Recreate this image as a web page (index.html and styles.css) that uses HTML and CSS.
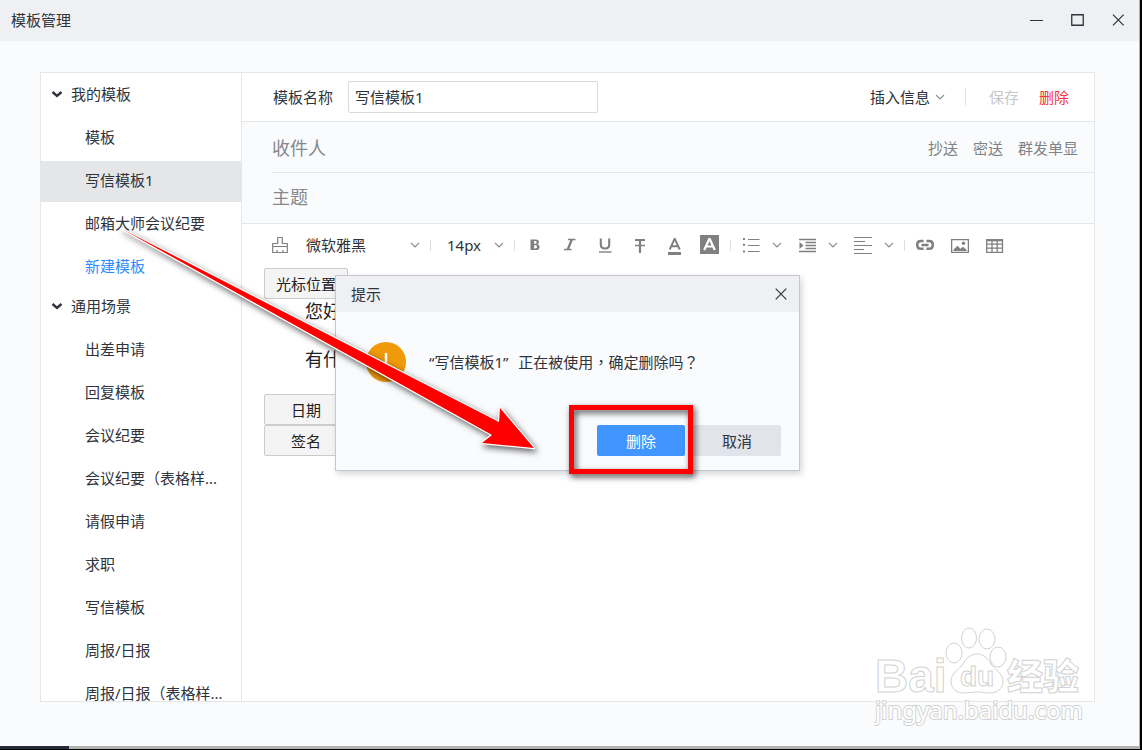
FILE: index.html
```html
<!DOCTYPE html>
<html lang="zh-CN">
<head>
<meta charset="utf-8">
<title>模板管理</title>
<link rel="stylesheet" href="styles.css">
</head>
<body>
<svg class="defs" aria-hidden="true">
  <symbol id="chev" viewBox="0 0 10 10"><path d="M1 3l4 4 4-4" fill="none" stroke="currentColor" stroke-width="1.2"/></symbol>
  <symbol id="fold" viewBox="0 0 12 12"><path d="M1.500 3l4.500 4 4.500-4" fill="none" stroke="currentColor" stroke-width="2.400"/></symbol>
  <symbol id="close" viewBox="0 0 12 12"><path d="M.7.7l10.600 10.600M11.300.7L.7 11.300" fill="none" stroke="currentColor" stroke-width="1.200"/></symbol>
</svg>
<div class="window">
  <header class="titlebar">
    <h1>模板管理</h1>
    <div class="controls">
      <button aria-label="最小化"><svg viewBox="0 0 13 12"><path d="M0 6.500h13" stroke="currentColor"/></svg></button>
      <button aria-label="最大化"><svg viewBox="0 0 13 12"><path d="M.75.75h11.500v10.500H.75z" fill="none" stroke="currentColor" stroke-width="1.300"/></svg></button>
      <button aria-label="关闭"><svg viewBox="0 0 13 12"><path d="M1 .7l10.600 10.600M11.600.7L1 11.300" fill="none" stroke="currentColor" stroke-width="1.200"/></svg></button>
    </div>
  </header>

  <main class="content">
    <div class="panel">
      <nav class="sidebar">
        <button class="item group"><svg><use href="#fold"/></svg>我的模板</button>
        <button class="item">模板</button>
        <button class="item selected">写信模板1</button>
        <button class="item">邮箱大师会议纪要</button>
        <button class="item create">新建模板</button>
        <button class="item group"><svg><use href="#fold"/></svg>通用场景</button>
        <button class="item">出差申请</button>
        <button class="item">回复模板</button>
        <button class="item">会议纪要</button>
        <button class="item">会议纪要（表格样...</button>
        <button class="item">请假申请</button>
        <button class="item">求职</button>
        <button class="item">写信模板</button>
        <button class="item">周报/日报</button>
        <button class="item">周报/日报（表格样...</button>
      </nav>

      <section class="editor">
        <div class="namebar">
          <label for="name">模板名称</label>
          <input id="name" class="name" type="text" value="写信模板1">
          <div class="actions">
            <button class="insert">插入信息<svg class="chev"><use href="#chev"/></svg></button>
            <span class="rule"></span>
            <button class="save">保存</button>
            <button class="remove">删除</button>
          </div>
        </div>

        <div class="fields">
          <div class="field">
            <input type="text" placeholder="收件人" aria-label="收件人">
            <button>抄送</button><button>密送</button><button>群发单显</button>
          </div>
          <div class="field subject">
            <input type="text" placeholder="主题" aria-label="主题">
          </div>
        </div>

        <div class="toolbar">
          <button class="tool" aria-label="格式刷"><svg viewBox="0 0 20 20"><path d="M2.700 17.500V8.500h5V2.500h4.600v6h5v9zM2.700 11.500h14.600M7 17.500v-2.500M13 17.500v-2.500" fill="none" stroke="currentColor" stroke-width="1.200"/></svg></button>
          <label class="pick font"><select aria-label="字体"><option>微软雅黑</option></select><svg class="chev"><use href="#chev"/></svg></label>
          <span class="sep"></span>
          <label class="pick size"><select aria-label="字号"><option>14px</option></select><svg class="chev"><use href="#chev"/></svg></label>
          <span class="sep"></span>
          <div class="tools">
            <button class="tool" aria-label="粗体"><svg viewBox="0 0 20 20"><path d="M5.500 4.500h5.200c2.400 0 3.300 1 3.300 2.500 0 1.300-.8 2-1.900 2.300 1.500.2 2.500 1 2.500 2.600 0 1.900-1.200 3.100-3.800 3.100H5.500zm3.600 1.600v2.700h.8c1.200 0 1.700-.4 1.700-1.400 0-.9-.5-1.300-1.500-1.300zm0 4.200v3.100h1c1.300 0 1.900-.5 1.900-1.600 0-1-.6-1.500-1.900-1.500z" fill="currentColor" fill-rule="evenodd"/></svg></button>
            <button class="tool" aria-label="斜体"><svg viewBox="0 0 20 20"><path d="M8 4.500h7.500M4 14.500h7.500" stroke="currentColor" stroke-width="1.300"/><path d="M11.800 4.500L7.800 14.500" stroke="currentColor" stroke-width="2.300"/></svg></button>
            <button class="tool" aria-label="下划线"><svg viewBox="0 0 20 20"><path d="M5.800 3.500v6c0 2.600 1.600 4 4.200 4s4.200-1.400 4.200-4v-6" fill="none" stroke="currentColor" stroke-width="2.100"/><path d="M4 17h12.500" stroke="currentColor" stroke-width="1.400"/></svg></button>
            <button class="tool" aria-label="删除线"><svg viewBox="0 0 20 20"><path d="M5 5h10M10 5v13" fill="none" stroke="currentColor" stroke-width="2.200"/><path d="M5 10.500h10" stroke="currentColor" stroke-width="1.500"/></svg></button>
            <button class="tool" aria-label="文字颜色"><svg viewBox="0 0 20 20"><path d="M4.700 14.500L9.500 4h.4l4.800 10.500M6.300 11.300h7" fill="none" stroke="currentColor" stroke-width="1.900"/><path d="M3 18.500h13" stroke="currentColor" stroke-width="3"/></svg></button>
            <button class="tool" aria-label="背景颜色"><svg viewBox="0 0 20 20"><path d="M0 0h19v19H0z" fill="currentColor"/><path d="M4.200 15L9.200 4.200h.6l5 10.800M6 11.500h7.200" fill="none" stroke="#fff" stroke-width="2.200"/></svg></button>
          </div>
          <span class="sep"></span>
          <div class="menus">
            <button class="menu" aria-label="列表"><svg viewBox="0 0 20 20"><path d="M1 4h2M1 9.800h2M1 16.500h2" stroke="currentColor" stroke-width="2"/><path d="M6 4.500h11.500M6 10.500h11.500M6 16.500h11.500" stroke="currentColor" stroke-width="1.200"/></svg><svg class="chev"><use href="#chev"/></svg></button>
            <button class="menu" aria-label="缩进"><svg viewBox="0 0 20 20"><path d="M1 4.500h17M7.500 7.500H18M7.500 10.500H18M7.500 13.500H18M1 16.500h17" stroke="currentColor" stroke-width="1.400"/><path d="M1.500 7v7l4-3.500z" fill="currentColor"/></svg><svg class="chev"><use href="#chev"/></svg></button>
            <button class="menu" aria-label="对齐"><svg viewBox="0 0 20 20"><path d="M0 2.500h18M0 6.500h11M0 10.500h18M0 14.500h10M0 18.500h18" stroke="currentColor" stroke-width="1.200"/></svg><svg class="chev"><use href="#chev"/></svg></button>
          </div>
          <span class="sep"></span>
          <div class="tools">
            <button class="tool" aria-label="链接"><svg viewBox="0 0 20 20"><path d="M8.600 6H5.700C3.500 6 2.200 7.500 2.200 9.800s1.300 4 3.500 4h2.900M11.400 6h2.900c2.200 0 3.500 1.500 3.500 3.800s-1.300 4-3.500 4h-2.900M6.500 10h7" fill="none" stroke="currentColor" stroke-width="2.500"/></svg></button>
            <button class="tool" aria-label="图片"><svg viewBox="0 0 20 20"><path d="M1.600 4.600h16.800v12.800H1.600z" fill="none" stroke="currentColor" stroke-width="1.300"/><path d="M3.500 16v-1.500l4-3.700 3 3 2.500-2 3.700 3.200v1z" fill="currentColor"/><circle cx="13.500" cy="8.200" r="1.700" fill="currentColor"/></svg></button>
            <button class="tool" aria-label="表格"><svg viewBox="0 0 20 20"><path d="M1.700 5h15.800v12.300H1.700zM1.700 9.200h15.800M1.700 13.200h15.800M7 5v12M12.200 5v12" fill="none" stroke="currentColor" stroke-width="1.300"/><path d="M1 5.200h17" stroke="currentColor" stroke-width="2.200"/></svg></button>
          </div>
        </div>

        <div class="body">
          <button class="chip">光标位置</button>
          <p>您好</p>
          <p>有什</p>
          <div class="chips">
            <button class="chip">日期</button>
            <button class="chip">签名</button>
          </div>
        </div>
      </section>
    </div>
  </main>
  <div class="taskbar"><span></span></div>
</div>

<div class="dialog" role="dialog" aria-labelledby="dlg">
  <div class="dialog-head"><h2 id="dlg">提示</h2><button aria-label="关闭"><svg><use href="#close"/></svg></button></div>
  <div class="dialog-body">
    <svg class="warn" viewBox="0 0 40 40"><circle cx="20" cy="20" r="20" fill="#f09a0a"/><path d="M20 11v12M20 26v3" stroke="#fff" stroke-width="2.500"/></svg>
    <p><span class="quoted">“写信模板1”</span>正在被使用<span class="punct" lang="zh-TW">，</span>确定删除吗<span class="punct" lang="zh-TW">？</span></p>
  </div>
  <div class="dialog-foot"><button class="primary">删除</button><button>取消</button></div>
</div>

<div class="marker"></div>
<svg class="arrow" viewBox="0 0 430 240" aria-hidden="true"><path d="M12 9L389 202 390 188 424 228 372 223 382 215z" fill="#f00" stroke="#fff" stroke-width="2.500" stroke-linejoin="round" paint-order="stroke"/></svg>

<svg class="brand" viewBox="0 0 220 104" role="img" aria-label="Baidu 经验">
  <text class="big" x="1" y="66">Bai</text>
  <text class="cn" x="133" y="64">经验</text>
  <g class="paw">
    <ellipse cx="80" cy="27" rx="8" ry="10"/>
    <ellipse cx="95" cy="12" rx="7.500" ry="10"/>
    <ellipse cx="113" cy="13" rx="8" ry="10"/>
    <ellipse cx="124" cy="31" rx="8" ry="10"/>
    <path d="M103 28c-7 0-11 5-14 10-4 6-12 9-12 17 0 9 7 12 13 12 5 0 8-1 13-1s8 1 13 1c7 0 13-4 13-12s-8-11-12-17c-3-5-7-10-14-10z"/>
  </g>
  <text class="du" x="86" y="60">du</text>
  <text class="url" x="1" y="93">jingyan.baidu.com</text>
</svg>
</body>
</html>
```
FILE: styles.css
```css
* { box-sizing: border-box; }

body {
  margin: 0;
  height: 100vh;
  padding: 0 2px 1px 0;
  background: #000;
  color: #2f333b;
  font: 15px/20px "Noto Sans", "Noto Sans CJK SC", sans-serif;
  overflow: hidden;
}

button, input, select {
  font: inherit;
  color: inherit;
  background: none;
  border: 0;
  margin: 0;
  padding: 0;
}

h1, h2, p { margin: 0; font-size: 15px; font-weight: 400; }

.defs { display: none; }

.window {
  height: 100%;
  display: flex;
  flex-direction: column;
  background: #fafbfd;
  border-right: 1px solid #b0b2b4;
}

.titlebar {
  flex: none;
  height: 41px;
  padding: 0 14px 1px 11px;
  display: flex;
  align-items: center;
  justify-content: space-between;
  background: #eef0f4;
}

.controls { display: flex; gap: 28px; }
.controls button { display: flex; }
.controls svg { width: 13px; height: 12px; }

.content {
  flex: 1;
  min-height: 0;
  padding: 31px 44px 44px 40px;
}

.panel {
  height: 100%;
  display: flex;
  background: #fff;
  border: 1px solid #e4e6e8;
}

.sidebar {
  flex: none;
  width: 201px;
  padding-top: 2px;
  display: flex;
  flex-direction: column;
  gap: 2px;
  overflow: hidden;
  border-right: 1px solid #e4e6e8;
}

.item {
  flex: none;
  height: 41px;
  padding: 0 0 2px 44px;
  line-height: 39px;
  text-align: left;
  white-space: nowrap;
}
.item.selected { background: #e4e6e8; }
.item.create { height: 38px; color: #2f8cff; }
.item.group { display: flex; align-items: center; gap: 8px; padding-left: 10px; }
.item.group svg { width: 12px; height: 12px; }

.editor { flex: 1; min-width: 0; display: flex; flex-direction: column; }

.namebar {
  height: 49px;
  padding: 0 25px 0 31px;
  display: flex;
  align-items: center;
  border-bottom: 1px solid #e4e6e8;
}
.name {
  width: 250px;
  height: 32px;
  margin-left: 15px;
  padding: 0 6px 2px;
  border: 1px solid #d8dadd;
  border-radius: 2px;
}
.actions { margin-left: auto; display: flex; align-items: center; gap: 20px; }
.insert { display: flex; align-items: center; gap: 5px; }
.rule { width: 1px; height: 18px; background: #e2e4e6; margin-right: 3px; }
.save { color: #c6c8cb; }
.remove { color: #f8333c; }

.chev { width: 10px; height: 10px; color: #8d9093; }

.fields {
  padding-left: 30px;
  background: #fafbfd;
  border-bottom: 1px solid #e4e6e8;
}
.field {
  height: 50px;
  padding: 2px 16px 0 0;
  display: flex;
  align-items: center;
  gap: 15px;
  color: #7f8286;
}
.field.subject { height: 51px; padding: 0 16px 2px 0; border-top: 1px solid #e4e6e8; }
.field input { flex: 1; min-width: 0; height: 28px; font-size: 18px; }
.field input::placeholder { color: #85888c; opacity: 1; }

.toolbar {
  height: 42px;
  padding-left: 28px;
  display: flex;
  align-items: center;
  color: #808080;
}
.tool { display: flex; }
.tool svg, .menu svg { width: 20px; height: 20px; }
.tools { display: flex; gap: 15px; }
.pick { display: flex; align-items: center; gap: 6px; margin-left: 16px; color: #2f333b; }
.pick select { appearance: none; width: 98px; height: 24px; }
.pick.size { margin-left: 6px; }
.pick.size select { width: 41px; }
.sep { width: 1px; height: 11px; margin: 0 10px; background: #dedede; }
.menus { display: flex; gap: 16px; margin-left: 1px; }
.menu { display: flex; align-items: center; gap: 10px; }
.menu .chev, .pick .chev { width: 10px; height: 10px; }

.body { padding: 2px 22px; color: #222; }
.body p { margin-left: 41px; font-size: 18px; line-height: 24px; }
.body p + p { margin-top: 24px; }
.chip {
  display: block;
  width: 84px;
  height: 31px;
  background: #f4f4f4;
  border: 1px solid #ccc;
  border-radius: 2px;
}
.chips { display: grid; margin-top: 23px; }

.taskbar { flex: none; display: flex; height: 3px; background: #b2b2b2; }
.taskbar span { width: 69px; background: #262c3a; }

.dialog {
  position: absolute;
  left: 335px;
  top: 275px;
  width: 465px;
  background: #fafbfd;
  border: 1px solid #c6c8cb;
  box-shadow: 2px 3px 6px rgba(0, 0, 0, .16);
}
.dialog-head {
  height: 36px;
  padding: 0 12px 0 15px;
  display: flex;
  align-items: center;
  justify-content: space-between;
  background: #eef0f4;
}
.dialog-head button { display: flex; }
.dialog-head svg { width: 12px; height: 12px; }
.dialog-body { display: flex; align-items: center; gap: 23px; padding: 30px 30px 0; }
.quoted { margin-right: 10px; }
.punct { font-family: "Noto Sans CJK TC", sans-serif; line-height: 1; }
.warn { width: 40px; height: 40px; }
.dialog-foot { display: flex; justify-content: flex-end; gap: 8px; padding: 43px 18px 14px; }
.dialog-foot button { width: 88px; height: 31px; border-radius: 2px; background: #e1e4eb; }
.dialog-foot .primary { background: #4095ff; color: #fff; }

.marker {
  position: absolute;
  left: 569px;
  top: 405px;
  width: 124px;
  height: 69px;
  border: 5px solid #f00;
  filter: drop-shadow(2px 3px 3px rgba(0, 0, 0, .7));
  pointer-events: none;
}
.arrow {
  position: absolute;
  left: 110px;
  top: 220px;
  width: 430px;
  height: 240px;
  filter: drop-shadow(2px 3px 3px rgba(0, 0, 0, .6));
  pointer-events: none;
}

.brand {
  position: absolute;
  right: 48px;
  bottom: 20px;
  width: 220px;
  height: 104px;
  fill: #fff;
  stroke: #d2d2d2;
  stroke-width: 1;
  pointer-events: none;
}
.brand .big { font: bold 46px "Liberation Sans", sans-serif; }
.brand .cn { font: 900 36px "Noto Sans CJK SC", sans-serif; }
.brand .du { font: bold 28px "Liberation Sans", sans-serif; }
.brand .url { font: 24px "Noto Sans", sans-serif; stroke-width: 2; paint-order: stroke; }
```
